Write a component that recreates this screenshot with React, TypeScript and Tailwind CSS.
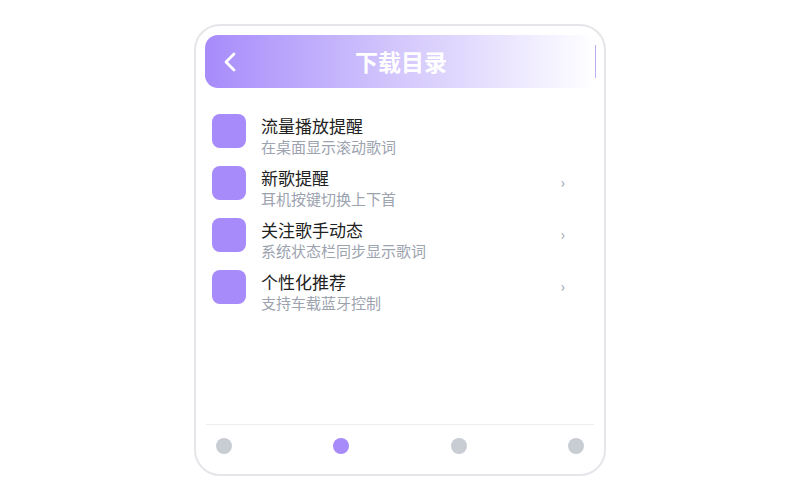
import React from 'react';

const items = [
    { title: '流量播放提醒', sub: '在桌面显示滚动歌词', arrow: false },
    { title: '新歌提醒', sub: '耳机按键切换上下首', arrow: true },
    { title: '关注歌手动态', sub: '系统状态栏同步显示歌词', arrow: true },
    { title: '个性化推荐', sub: '支持车载蓝牙控制', arrow: true },
];

export default function App() {
    return (
        <div
            className="w-[800px] h-[500px] bg-white flex items-center justify-center"
            style={{ fontFamily: '"Noto Sans CJK SC", "Noto Sans", sans-serif' }}
        >
            <div className="w-[412px] h-[452px] border-2 border-[#e6e6ea] rounded-[26px] flex flex-col">
                <div className="mt-[9px] ml-[9px] w-[392px] h-[53px] rounded-[13px] bg-gradient-to-r from-[#a78bfa] via-[#d4c8fc] to-white flex items-center relative">
                    <svg className="ml-[18px]" width="14" height="20" viewBox="0 0 14 20" fill="none">
                        <path d="M11 2 L3 10 L11 18" stroke="white" strokeWidth="2.8" strokeLinecap="round" strokeLinejoin="round" />
                    </svg>
                    <div className="absolute inset-0 flex items-center justify-center text-white text-[23px] font-bold">
                        下载目录
                    </div>
                    <div className="absolute right-[1px] top-[10px] w-[1px] h-[33px] bg-[#bfaefa]" />
                </div>

                <div className="mt-[17px] px-4 flex flex-col">
                    {items.map((it) => (
                        <div key={it.title} className="h-[52px] flex items-start py-[9px]">
                            <div className="w-[34px] h-[34px] rounded-[8px] bg-[#a78bfa] shrink-0" />
                            <div className="ml-[15px] flex-1 flex flex-col">
                                <span className="text-[17px] leading-[23px] text-[#222222]">{it.title}</span>
                                <span className="text-[15px] leading-[20px] text-[#9ca3af]">{it.sub}</span>
                            </div>
                            {it.arrow && (
                                <span className="self-center -mt-[3px] mr-[23px] text-[15px] leading-none text-[#9ca3af]">›</span>
                            )}
                        </div>
                    ))}
                </div>

                <div className="flex-1" />

                <div className="mx-[10px] border-t border-[#eeeef2] pt-[13px] pb-[20px] px-[10px] flex items-center justify-between">
                    <div className="w-4 h-4 rounded-full bg-[#c8ccd3]" />
                    <div className="w-4 h-4 rounded-full bg-[#a78bfa]" />
                    <div className="w-4 h-4 rounded-full bg-[#c8ccd3]" />
                    <div className="w-4 h-4 rounded-full bg-[#c8ccd3]" />
                </div>
            </div>
        </div>
    );
}
